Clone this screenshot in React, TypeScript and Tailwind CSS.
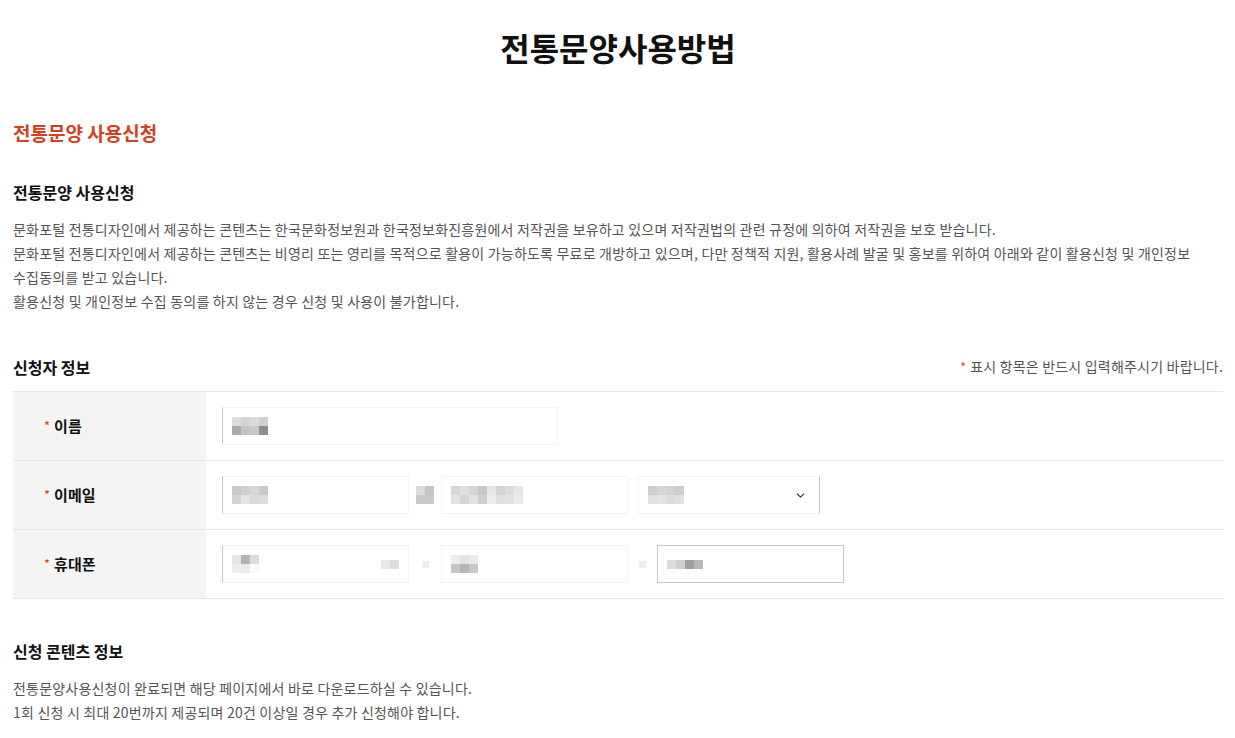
import { ChevronDown } from "lucide-react";

const FONT = "font-['Noto_Sans_CJK_KR','Noto_Sans',sans-serif]";

// blurred values in the screenshot are shown as small mosaics
function Mosaic({ cells }: { cells: string[][] }) {
  return (
    <div className="flex flex-col">
      {cells.map((row, i) => (
        <div key={i} className="flex">
          {row.map((c, j) => (
            <div key={j} className="h-[9px] w-[9px]" style={{ backgroundColor: c }} />
          ))}
        </div>
      ))}
    </div>
  );
}

function Field({
  width,
  edge = "faint",
  children,
}: {
  width: string;
  edge?: "faint" | "left" | "full";
  children?: React.ReactNode;
}) {
  const border =
    edge === "full"
      ? "border border-[#c9c9c9]"
      : edge === "left"
        ? "border border-[#f4f4f4] border-l-[#c9c9c9]"
        : "border border-[#f4f4f4]";
  return (
    <div className={`flex h-[38px] items-center px-[9px] bg-white ${border} ${width}`}>{children}</div>
  );
}

function Row({ label, children }: { label: string; children: React.ReactNode }) {
  return (
    <div className="flex h-[69px] border-b border-[#e6e6e6]">
      <div className="flex w-[193px] items-center bg-[#f4f4f4] pl-[31px]">
        <span className="mr-[4px] text-[13px] text-[#d9441c]">*</span>
        <span className="text-[15px] font-bold text-[#111]">{label}</span>
      </div>
      <div className="flex flex-1 items-center pl-[16px]">{children}</div>
    </div>
  );
}

function Sep({ width = "w-[32px]", children }: { width?: string; children: React.ReactNode }) {
  return <span className={`flex justify-center text-[13px] text-[#ddd] ${width}`}>{children}</span>;
}

export default function App() {
  return (
    <div className={`${FONT} bg-white min-h-[738px]`}>
      <div className="mx-[13px] w-[1210px] pt-[27px]">
        <h1 className="text-center text-[32px] font-bold leading-[40px] text-[#111]">전통문양사용방법</h1>

        <h2 className="mt-[52px] text-[19px] font-bold leading-[28px] text-[#d4411b]">전통문양 사용신청</h2>

        <h3 className="mt-[33px] text-[16px] font-bold leading-[24px] text-[#111]">전통문양 사용신청</h3>
        <div className="mt-[13px] text-[14px] leading-[24px] tracking-[0.2px] text-[#555]">
          <p className="whitespace-nowrap">
            문화포털 전통디자인에서 제공하는 콘텐츠는 한국문화정보원과 한국정보화진흥원에서 저작권을 보유하고 있으며 저작권법의 관련 규정에 의하여 저작권을 보호 받습니다.
          </p>
          <p className="whitespace-nowrap">
            문화포털 전통디자인에서 제공하는 콘텐츠는 비영리 또는 영리를 목적으로 활용이 가능하도록 무료로 개방하고 있으며, 다만 정책적 지원, 활용사례 발굴 및 홍보를 위하여 아래와 같이 활용신청 및 개인정보
          </p>
          <p className="whitespace-nowrap">수집동의를 받고 있습니다.</p>
          <p className="whitespace-nowrap">활용신청 및 개인정보 수집 동의를 하지 않는 경우 신청 및 사용이 불가합니다.</p>
        </div>

        <div className="mt-[41px] flex items-center justify-between leading-[24px]">
          <h3 className="text-[16px] font-bold text-[#111]">신청자 정보</h3>
          <p className="text-[14px] tracking-[0.2px] text-[#555]">
            <span className="mr-[4px] text-[12px] text-[#d9441c]">*</span>표시 항목은 반드시 입력해주시기 바랍니다.
          </p>
        </div>

        <div className="mt-[12px] border-t border-[#e6e6e6]">
          <Row label="이름">
            <Field width="w-[336px]" edge="left">
              <Mosaic
                cells={[
                  ["#dcdcdc", "#d4d4d4", "#dcdcdc", "#cfcfcf"],
                  ["#ababab", "#c4c4c4", "#c8c8c8", "#8f8f8f"],
                ]}
              />
            </Field>
          </Row>
          <Row label="이메일">
            <Field width="w-[187px]" edge="left">
              <Mosaic
                cells={[
                  ["#c9c9c9", "#d0d0d0", "#d7d7d7", "#cbcbcb"],
                  ["#d3d3d3", "#e4e4e4", "#dadada", "#dddddd"],
                ]}
              />
            </Field>
            <Sep>
              <Mosaic cells={[["#dcdcdc", "#c4c4c4"], ["#c9c9c9", "#c9c9c9"]]} />
            </Sep>
            <Field width="w-[187px]">
              <Mosaic
                cells={[
                  ["#d7d7d7", "#e0e0e0", "#d6d6d6", "#c8c8c8", "#e6e6e6", "#d4d4d4", "#dbdbdb", "#e6e6e6"],
                  ["#e2e2e2", "#d6d6d6", "#e2e2e2", "#cfcfcf", "#ebebeb", "#dedede", "#e2e2e2", "#ebebeb"],
                ]}
              />
            </Field>
            <div className="ml-[10px] flex h-[38px] w-[182px] items-center justify-between border border-[#f4f4f4] border-r-[#c9c9c9] bg-white pl-[9px] pr-[12px]">
              <Mosaic
                cells={[
                  ["#cfcfcf", "#d5d5d5", "#d2d2d2", "#cccccc"],
                  ["#e0e0e0", "#e4e4e4", "#dcdcdc", "#e0e0e0"],
                ]}
              />
              <ChevronDown size={13} strokeWidth={2} className="text-[#333]" />
            </div>
          </Row>
          <Row label="휴대폰">
            <Field width="w-[187px]" edge="left">
              <div className="flex w-full items-center justify-between">
                <Mosaic cells={[["#e6e6e6", "#b3b3b3", "#dcdcdc"], ["#eeeeee", "#eaeaea", "#fafafa"]]} />
                <Mosaic cells={[["#e8e8e8", "#dcdcdc"]]} />
              </div>
            </Field>
            <Sep>
              <div className="h-[7px] w-[7px] bg-[#eeeeee]" />
            </Sep>
            <Field width="w-[187px]">
              <Mosaic cells={[["#ededed", "#e4e4e4", "#eaeaea"], ["#c6c6c6", "#b5b5b5", "#c8c8c8"]]} />
            </Field>
            <Sep width="w-[29px]">
              <div className="h-[7px] w-[7px] bg-[#eeeeee]" />
            </Sep>
            <Field width="w-[187px]" edge="full">
              <Mosaic cells={[["#dcdcdc", "#d0d0d0", "#a0a0a0", "#b8b8b8"]]} />
            </Field>
          </Row>
        </div>

        <h3 className="mt-[40px] text-[16px] font-bold leading-[24px] text-[#111]">신청 콘텐츠 정보</h3>
        <div className="mt-[13px] text-[14px] leading-[24px] tracking-[0.2px] text-[#555]">
          <p>전통문양사용신청이 완료되면 해당 페이지에서 바로 다운로드하실 수 있습니다.</p>
          <p>1회 신청 시 최대 20번까지 제공되며 20건 이상일 경우 추가 신청해야 합니다.</p>
        </div>
      </div>
    </div>
  );
}
